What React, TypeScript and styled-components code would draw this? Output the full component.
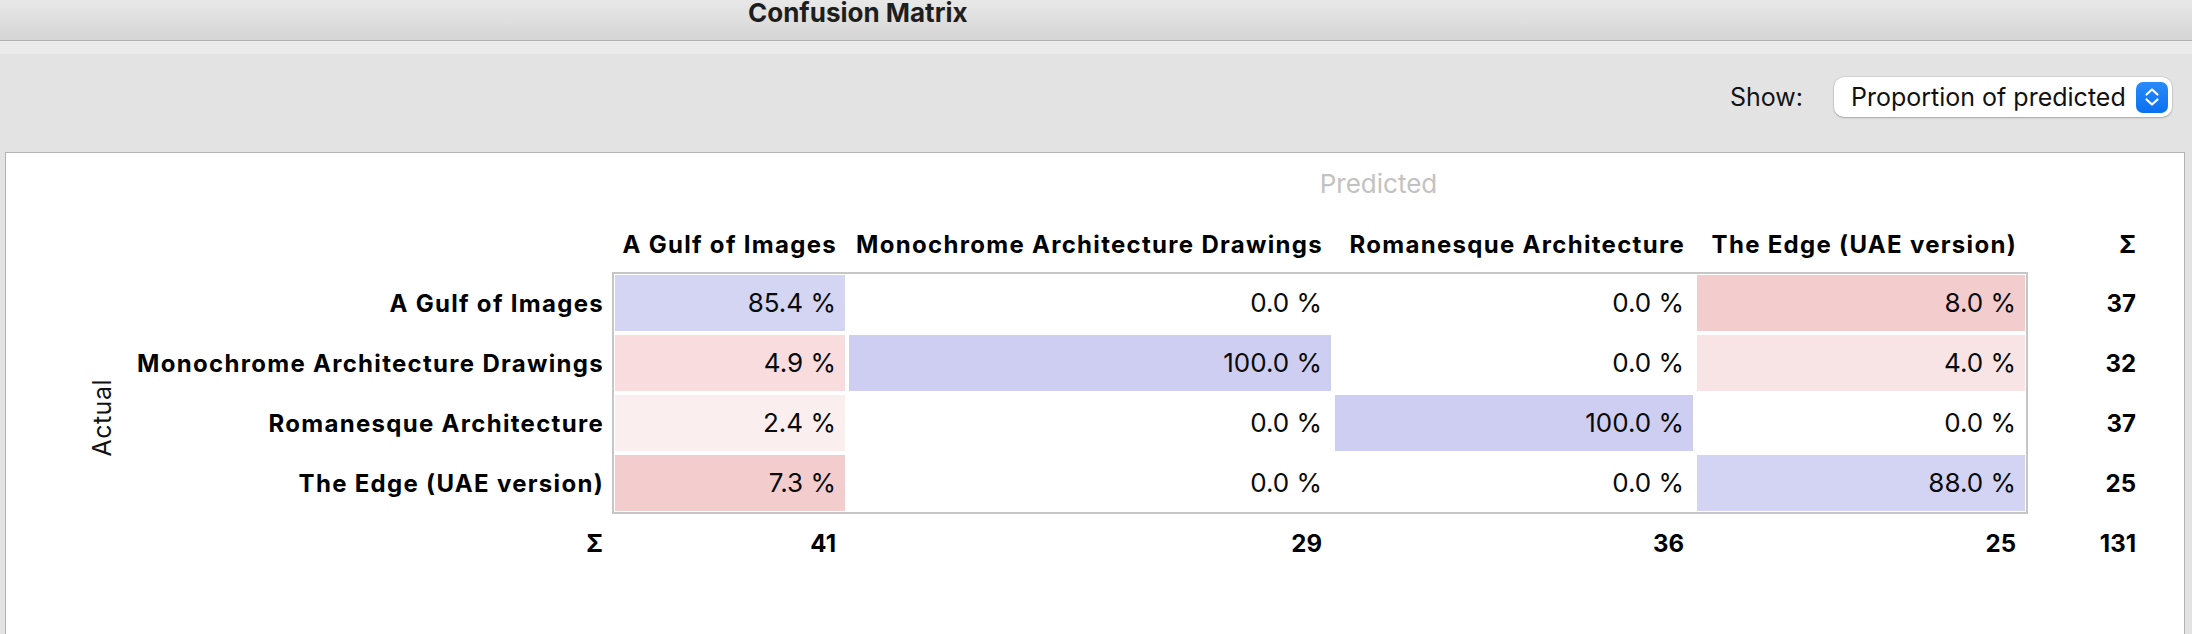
import React from "react";
import styled, { createGlobalStyle } from "styled-components";

const Global = createGlobalStyle`
  html, body { margin: 0; padding: 0; background: #e3e3e3; }
  body { font-family: Inter, "Noto Sans", "Liberation Sans", sans-serif; color: #000; }
  #root { width: 2192px; height: 634px; overflow: hidden; }
`;

const Window = styled.div`
  width: 2192px;
  height: 634px;
  display: flex;
  flex-direction: column;
  background: #e3e3e3;
  overflow: hidden;
`;

const TitleBar = styled.div`
  flex: none;
  box-sizing: border-box;
  background: linear-gradient(#e8e8e8, #d5d5d5);
  border-bottom: 1px solid #b1b1b1;
  height: 41px;
  display: flex;
  align-items: flex-start;
  padding: 3px 0 0 748px;
`;

const Title = styled.div`
  font-weight: 700;
  font-size: 26px;
  line-height: 20px;
  height: 20px;
  color: #1e1e1e;
`;

const Band = styled.div`
  height: 13px;
  flex: none;
  background: #ebebeb;
`;

const Controls = styled.div`
  height: 98px;
  flex: none;
  box-sizing: border-box;
  padding: 23px 20px 0 0;
  display: flex;
  justify-content: flex-end;
  align-items: flex-start;
`;

const ShowGroup = styled.div`
  display: flex;
  align-items: center;
  gap: 31px;
`;

const ShowLabel = styled.span`
  font-size: 25px;
  line-height: 40px;
  color: #141414;
`;

const Popup = styled.div`
  width: 338px;
  height: 40px;
  box-sizing: border-box;
  background: #fff;
  border-radius: 10px;
  box-shadow: 0 0 0 0.5px rgba(0, 0, 0, 0.12), 0 1px 2px rgba(0, 0, 0, 0.22);
  display: flex;
  align-items: center;
  justify-content: space-between;
  padding: 0 4px 0 17px;
`;

const PopupText = styled.span`
  font-size: 25px;
  line-height: 40px;
  color: #111;
  white-space: nowrap;
`;

const Stepper = styled.div`
  width: 32px;
  height: 31px;
  border-radius: 7px;
  background: linear-gradient(#2b8bfb, #0a6ff0);
  display: flex;
  align-items: center;
  justify-content: center;
`;

const Panel = styled.div`
  flex: 1;
  margin: 0 7px 0 5px;
  background: #fff;
  border: 1px solid #b3b3b3;
  border-bottom: none;
  padding: 11px 0 0 77px;
  display: grid;
  grid-template-columns: 38px 491px 1416px 117px;
  grid-template-rows: 40px 68px auto auto;
  align-content: start;
`;

const Predicted = styled.div`
  grid-column: 3 / span 2;
  grid-row: 1;
  text-align: center;
  font-size: 26px;
  line-height: 40px;
  color: #c2c2c2;
`;

const Track = styled.div<{ $row: number }>`
  grid-column: 3;
  grid-row: ${(p) => p.$row};
  display: grid;
  grid-template-columns: 230px 482px 358px 328px;
  column-gap: 4px;
  padding: 0 3px;
  align-self: ${(p) => (p.$row === 2 ? "end" : "start")};
  margin-bottom: ${(p) => (p.$row === 2 ? "7px" : "0")};
  padding-top: ${(p) => (p.$row === 4 ? "10px" : "0")};
`;

const BoldCell = styled.div<{ $label?: boolean }>`
  font-weight: 700;
  font-size: 24px;
  line-height: 40px;
  text-align: right;
  padding-right: ${(p) => (p.$label ? "8px" : "9px")};
  letter-spacing: ${(p) => (p.$label ? "1.3px" : "0")};
  white-space: nowrap;
  color: #000;
`;

const SigmaHead = styled(BoldCell)<{ $row: number; $col: number }>`
  grid-column: ${(p) => p.$col};
  grid-row: ${(p) => p.$row};
  align-self: ${(p) => (p.$row === 2 ? "end" : "start")};
  margin-bottom: ${(p) => (p.$row === 2 ? "7px" : "0")};
  padding-top: ${(p) => (p.$row === 4 ? "10px" : "0")};
`;

const Actual = styled.div`
  grid-column: 1;
  grid-row: 3 / span 2;
  align-self: center;
  justify-self: center;
  writing-mode: vertical-rl;
  transform: rotate(180deg);
  font-size: 25px;
  letter-spacing: 0.5px;
  color: #111;
`;

const SideList = styled.div<{ $col: number }>`
  grid-column: ${(p) => p.$col};
  grid-row: 3;
  display: flex;
  flex-direction: column;
  gap: 4px;
  padding: 3px 0;
`;

const SideCell = styled(BoldCell)`
  height: 56px;
  line-height: 58px;
`;

const Matrix = styled.div`
  grid-column: 3;
  grid-row: 3;
  border: 2px solid #c6c6c6;
  padding: 1px;
  display: grid;
  grid-template-columns: 230px 482px 358px 328px;
  grid-auto-rows: 56px;
  gap: 4px;
`;

const ValueCell = styled.div<{ $bg: string }>`
  background: ${(p) => p.$bg};
  font-size: 26px;
  line-height: 56px;
  text-align: right;
  padding-right: 9px;
  color: #0a0a0a;
  white-space: nowrap;
`;

const classes = [
  "A Gulf of Images",
  "Monochrome Architecture Drawings",
  "Romanesque Architecture",
  "The Edge (UAE version)",
];

const values: { v: string; bg: string }[][] = [
  [
    { v: "85.4 %", bg: "#d4d4f3" },
    { v: "0.0 %", bg: "#ffffff" },
    { v: "0.0 %", bg: "#ffffff" },
    { v: "8.0 %", bg: "#f3cccd" },
  ],
  [
    { v: "4.9 %", bg: "#f8dcde" },
    { v: "100.0 %", bg: "#cecef2" },
    { v: "0.0 %", bg: "#ffffff" },
    { v: "4.0 %", bg: "#f8e4e5" },
  ],
  [
    { v: "2.4 %", bg: "#faeeee" },
    { v: "0.0 %", bg: "#ffffff" },
    { v: "100.0 %", bg: "#cecef2" },
    { v: "0.0 %", bg: "#ffffff" },
  ],
  [
    { v: "7.3 %", bg: "#f3cdce" },
    { v: "0.0 %", bg: "#ffffff" },
    { v: "0.0 %", bg: "#ffffff" },
    { v: "88.0 %", bg: "#d3d3f3" },
  ],
];

const rowSums = ["37", "32", "37", "25"];
const colSums = ["41", "29", "36", "25"];

const StepperIcon = () => (
  <svg width="18" height="24" viewBox="0 0 18 24" fill="none">
    <path d="M3.5 9.5 L9 4.5 L14.5 9.5" stroke="#fff" strokeWidth="2.2" strokeLinecap="round" strokeLinejoin="round" />
    <path d="M3.5 14.5 L9 19.5 L14.5 14.5" stroke="#fff" strokeWidth="2.2" strokeLinecap="round" strokeLinejoin="round" />
  </svg>
);

export default function App() {
  return (
    <Window>
      <Global />
      <TitleBar>
        <Title>Confusion Matrix</Title>
      </TitleBar>
      <Band />
      <Controls>
        <ShowGroup>
          <ShowLabel>Show:</ShowLabel>
          <Popup>
            <PopupText>Proportion of predicted</PopupText>
            <Stepper>
              <StepperIcon />
            </Stepper>
          </Popup>
        </ShowGroup>
      </Controls>
      <Panel>
        <Predicted>Predicted</Predicted>
        <Track $row={2}>
          {classes.map((c) => (
            <BoldCell key={c} $label>
              {c}
            </BoldCell>
          ))}
        </Track>
        <SigmaHead $row={2} $col={4}>Σ</SigmaHead>
        <Actual>Actual</Actual>
        <SideList $col={2}>
          {classes.map((c) => (
            <SideCell key={c} $label>
              {c}
            </SideCell>
          ))}
        </SideList>
        <Matrix>
          {values.map((row, i) =>
            row.map((cell, j) => (
              <ValueCell key={`${i}-${j}`} $bg={cell.bg}>
                {cell.v}
              </ValueCell>
            ))
          )}
        </Matrix>
        <SideList $col={4}>
          {rowSums.map((s, i) => (
            <SideCell key={i}>{s}</SideCell>
          ))}
        </SideList>
        <SigmaHead $row={4} $col={2}>Σ</SigmaHead>
        <Track $row={4}>
          {colSums.map((s, i) => (
            <BoldCell key={i}>{s}</BoldCell>
          ))}
        </Track>
        <SigmaHead $row={4} $col={4}>131</SigmaHead>
      </Panel>
    </Window>
  );
}
